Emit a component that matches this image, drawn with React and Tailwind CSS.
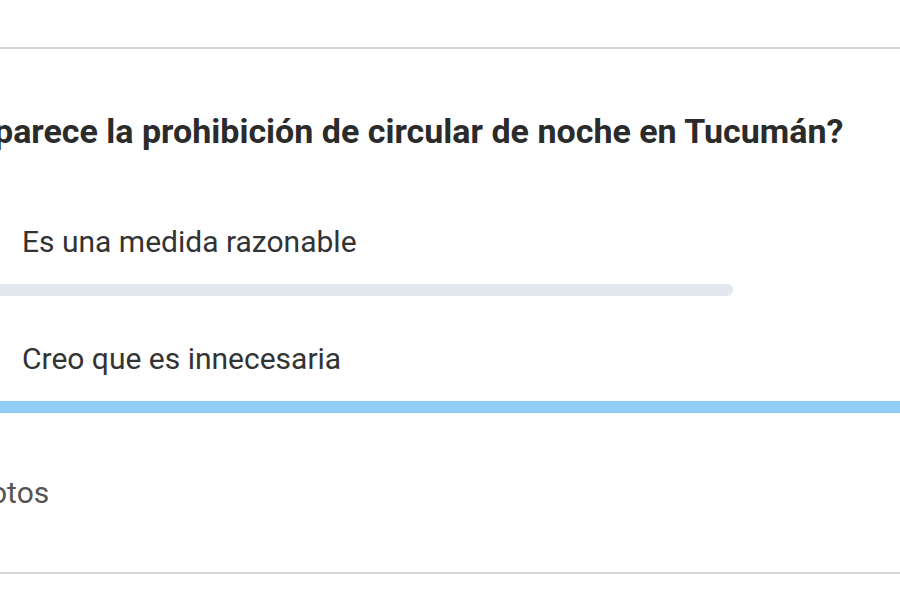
import React from 'react';

const options = [
  { label: 'Es una medida razonable', active: false },
  { label: 'Creo que es innecesaria', active: true },
];

function PollOption({ label, active, first }) {
  return (
    <div className={first ? 'flex flex-col' : 'flex flex-col mt-[48px]'}>
      <div className="pl-[22px] text-[30px] leading-none text-[#333333] whitespace-nowrap">{label}</div>
      <div className="mt-[27px] h-[12px] -ml-[40px] -mr-[40px]">
        <div
          className={active ? 'h-full w-full bg-[#90cdf4]' : 'h-full w-[773px] rounded-r-full bg-[#e2e8ee]'}
        />
      </div>
    </div>
  );
}

export default function App() {
  return (
    <div
      className="w-[900px] h-[600px] overflow-hidden bg-white flex flex-col"
      style={{ fontFamily: 'Roboto, "Noto Sans", sans-serif' }}
    >
      <div className="h-[49px] shrink-0 border-b-2 border-[#d6d6d6]" />
      <div className="flex-1 flex flex-col">
        <h2 className="mt-[65px] -ml-[6px] text-[34px] font-bold leading-none text-[#2b2b2b] whitespace-nowrap">
          parece la prohibición de circular de noche en Tucumán?
        </h2>
        <div className="mt-[79px] flex flex-col">
          {options.map((o, i) => (
            <PollOption key={o.label} first={i === 0} {...o} />
          ))}
        </div>
        <p className="mt-[65px] -ml-[10px] text-[30px] text-[#555555] leading-none">otos</p>
      </div>
      <div className="h-[28px] shrink-0 border-t-2 border-[#d6d6d6]" />
    </div>
  );
}
